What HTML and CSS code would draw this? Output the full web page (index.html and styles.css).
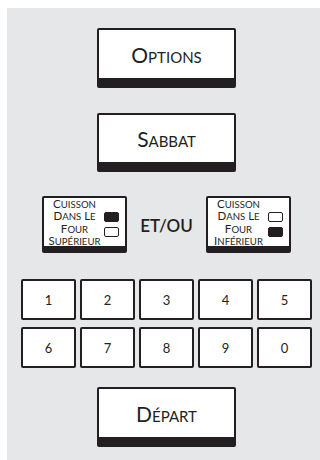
FILE: index.html
```html
<!DOCTYPE html>
<html lang="fr">
<head>
  <meta charset="UTF-8">
  <title>Panneau four</title>
  <link rel="stylesheet" href="styles.css">
</head>
<body>
  <div class="panel">
    <button class="big-btn">Options</button>
    <button class="big-btn sabbat">Sabbat</button>

    <div class="oven-row">
      <button class="oven-btn">
        <span class="oven-label">
          C<small>uisson</small><br>
          D<small>ans</small> L<small>e</small><br>
          F<small>our</small><br>
          S<small>upérieur</small>
        </span>
        <span class="leds">
          <span class="led on"></span>
          <span class="led"></span>
        </span>
      </button>
      <div class="andor">ET/OU</div>
      <button class="oven-btn">
        <span class="oven-label">
          C<small>uisson</small><br>
          D<small>ans</small> L<small>e</small><br>
          F<small>our</small><br>
          I<small>nférieur</small>
        </span>
        <span class="leds">
          <span class="led"></span>
          <span class="led on"></span>
        </span>
      </button>
    </div>

    <div class="keypad">
      <button class="key">1</button>
      <button class="key">2</button>
      <button class="key">3</button>
      <button class="key">4</button>
      <button class="key">5</button>
      <button class="key">6</button>
      <button class="key">7</button>
      <button class="key">8</button>
      <button class="key">9</button>
      <button class="key">0</button>
    </div>

    <button class="big-btn start">Départ</button>
  </div>
</body>
</html>
```

FILE: styles.css
```css
body {
  margin: 0;
  background: #fff;
  font-family: Lato, "Liberation Sans", sans-serif;
  color: #231f20;
}
.panel {
  margin: 8px 0 0 7px;
  min-height: 452px;
  box-sizing: border-box;
  background: #e6e7e8;
  padding: 20px 0 0 6px;
  display: flex;
  flex-direction: column;
  align-items: center;
}
button {
  font-family: inherit;
  color: #231f20;
  background: #fff;
  padding: 0;
  margin: 0;
  cursor: pointer;
}
.big-btn {
  width: 139px;
  height: 60px;
  box-sizing: border-box;
  border: 2px solid #231f20;
  border-bottom-width: 10px;
  border-radius: 2px;
  font-size: 21px;
  font-variant: small-caps;
  display: flex;
  align-items: center;
  justify-content: center;
}
.sabbat {
  margin-top: 25px;
  height: 59px;
}
.oven-row {
  margin-top: 24px;
  display: flex;
  align-items: center;
}
.oven-btn {
  width: 85px;
  height: 57px;
  box-sizing: border-box;
  border: 2px solid #231f20;
  border-bottom-width: 7px;
  border-radius: 2px;
  display: flex;
  align-items: center;
  padding: 0 6px 0 1px;
}
.oven-label {
  flex: 1;
  text-align: center;
  font-size: 11.5px;
  line-height: 11.3px;
  margin-top: 1px;
}
.oven-label small {
  font-size: 9.6px;
  text-transform: uppercase;
}
.leds {
  display: flex;
  flex-direction: column;
  gap: 5px;
  margin-top: 5px;
}
.led {
  width: 15px;
  height: 10px;
  box-sizing: border-box;
  border: 1.5px solid #231f20;
  border-radius: 2px;
  background: #fff;
}
.led.on {
  background: #231f20;
}
.andor {
  width: 79px;
  text-align: center;
  font-size: 17px;
  font-weight: 600;
  padding-top: 2px;
}
.keypad {
  margin-top: 26px;
  display: grid;
  grid-template-columns: repeat(5, 55px);
  grid-auto-rows: 41px;
  column-gap: 4px;
  row-gap: 7px;
}
.key {
  border: 2.5px solid #231f20;
  border-radius: 2px;
  font-size: 13px;
}
.start {
  margin-top: 19px;
}
```
